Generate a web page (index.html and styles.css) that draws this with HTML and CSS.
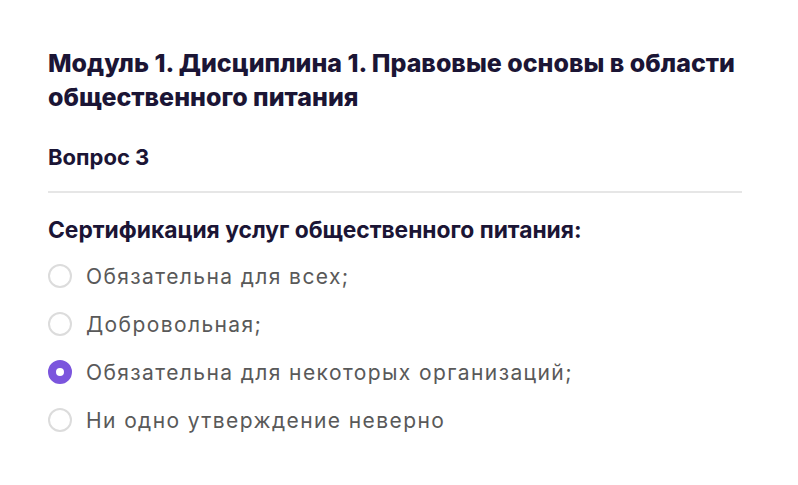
FILE: index.html
```html
<!DOCTYPE html>
<html lang="ru">
<head>
    <meta charset="UTF-8">
    <meta name="viewport" content="width=device-width, initial-scale=1.0">
    <title>Вопрос 3</title>
    <link rel="stylesheet" href="styles.css">
</head>
<body>
    <div class="quiz">
        <h1 class="quiz-title">Модуль 1. Дисциплина 1. Правовые основы в области общественного питания</h1>
        <div class="quiz-step">Вопрос 3</div>
        <hr class="quiz-divider">
        <form class="question">
            <p class="question-text">Сертификация услуг общественного питания:</p>

            <label class="option">
                <input type="radio" name="answer" value="1">
                <span class="radio"></span>
                <span class="option-text">Обязательна для всех;</span>
            </label>
            <label class="option">
                <input type="radio" name="answer" value="2">
                <span class="radio"></span>
                <span class="option-text">Добровольная;</span>
            </label>
            <label class="option">
                <input type="radio" name="answer" value="3" checked>
                <span class="radio"></span>
                <span class="option-text">Обязательна для некоторых организаций;</span>
            </label>
            <label class="option">
                <input type="radio" name="answer" value="4">
                <span class="radio"></span>
                <span class="option-text">Ни одно утверждение неверно</span>
            </label>
        </form>
    </div>
</body>
</html>
```

FILE: styles.css
```css
body {
    margin: 0;
    padding: 0;
    background: #ffffff;
    font-family: Inter, "Noto Sans", sans-serif;
}
.quiz {
    padding: 46px 56px 0 48px;
}
.quiz-title {
    margin: 0 -30px 0 0;
    font-size: 25px;
    line-height: 34px;
    font-weight: 800;
    color: #1b1535;
}
.quiz-step {
    margin-top: 29px;
    font-size: 22px;
    line-height: 28px;
    font-weight: 700;
    color: #1b1535;
}
.quiz-divider {
    margin: 20px 0 0;
    border: none;
    height: 2px;
    background: #e6e6e6;
}
.question {
    margin: 0;
}
.question-text {
    margin: 22px 0 7px;
    font-size: 22.8px;
    line-height: 30px;
    font-weight: 700;
    color: #1b1535;
}
.option {
    display: flex;
    align-items: center;
    gap: 14px;
    height: 48px;
    cursor: pointer;
}
.option input {
    display: none;
}
.radio {
    width: 24px;
    height: 24px;
    box-sizing: border-box;
    border: 2.5px solid #dcdcdc;
    border-radius: 50%;
    flex-shrink: 0;
}
.option input:checked + .radio {
    border: 8px solid #7b55dd;
}
.option-text {
    font-size: 21px;
    letter-spacing: 1.4px;
    color: #595959;
}
```
